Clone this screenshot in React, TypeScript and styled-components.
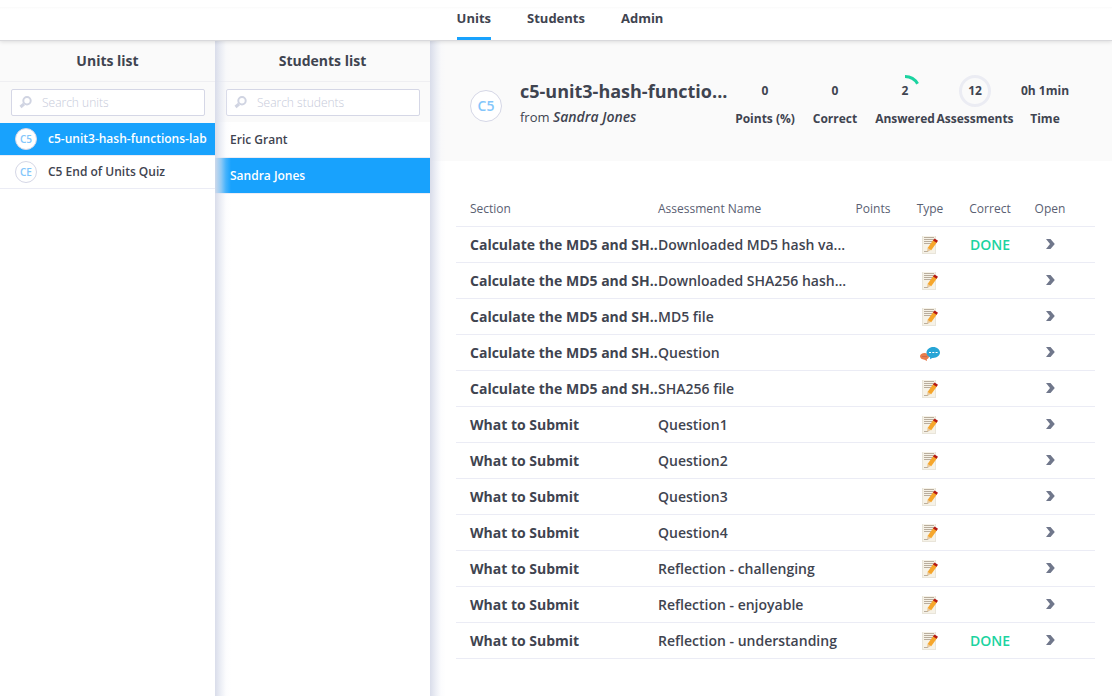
import React from "react";
import styled, { createGlobalStyle, css } from "styled-components";

const color = {
  text: "#3f4450",
  muted: "#5a6072",
  blue: "#18a2fd",
  paleBlue: "#83c6fb",
  line: "#ebecf5",
  outline: "#d5d7e6",
  panel: "#fafafa",
  green: "#1bd3a0",
};

const GlobalStyle = createGlobalStyle`
  * { box-sizing: border-box; }
  body {
    margin: 0;
    background: #fff;
    color: ${color.text};
    font-family: "Open Sans", "Noto Sans", sans-serif;
    font-size: 13px;
    line-height: 18px;
  }
  button, input { font: inherit; color: inherit; }
`;

const Page = styled.div`
  display: flex;
  flex-direction: column;
  min-height: 100vh;
`;

const TopNav = styled.nav`
  display: flex;
  justify-content: center;
  gap: 36px;
  height: 41px;
  padding: 9px 0 0 8px;
  border-bottom: 1px solid #d9d9dc;
  box-shadow: 0 1px 4px rgba(0, 0, 0, 0.12);
  position: relative;
  z-index: 2;
  background: linear-gradient(#fff 7px, #fafafa 7px, #fff 9px);
`;

const NavLink = styled.a<{ $active?: boolean }>`
  color: ${color.text};
  font-weight: 700;
  text-decoration: none;
  border-bottom: 3px solid ${(p) => (p.$active ? color.blue : "transparent")};
`;

const Body = styled.div`
  display: flex;
  flex: 1;
`;

const edgeShade = css`
  position: relative;
  &::before {
    content: "";
    position: absolute;
    inset: 0 auto 0 0;
    width: 16px;
    pointer-events: none;
    background: linear-gradient(
      to right,
      rgba(215, 219, 233, 0.95),
      rgba(225, 229, 240, 0.6) 6px,
      rgba(240, 242, 250, 0.2) 11px,
      rgba(250, 250, 255, 0)
    );
  }
`;

const Column = styled.section<{ $shaded?: boolean }>`
  flex: 0 0 215px;
  min-width: 0;
  ${(p) => p.$shaded && edgeShade}
`;

const ColumnTitle = styled.h2`
  margin: 0;
  padding: 10px 0;
  background: ${color.panel};
  border-bottom: 1px solid #efeff2;
  text-align: center;
  font-size: 14px;
  line-height: 20px;
  font-weight: 700;
`;

const SearchArea = styled.div<{ $compact?: boolean }>`
  padding: 7px 10px ${(p) => (p.$compact ? 6 : 7)}px 11px;
  background: ${color.panel};
`;

const SearchField = styled.label`
  display: flex;
  align-items: center;
  gap: 10px;
  height: 27px;
  padding-left: 7px;
  background: #fff;
  border: 1px solid ${color.outline};
  border-radius: 2px;
`;

const SearchInput = styled.input`
  flex: 1;
  min-width: 0;
  padding: 0;
  border: 0;
  outline: 0;
  background: none;
  font-size: 12px;
  &::placeholder {
    color: #c6cad9;
    font-weight: 300;
    opacity: 1;
  }
`;

const List = styled.ul`
  margin: 0;
  padding: 0;
  list-style: none;
`;

const ListButton = styled.button<{ $active?: boolean; $tall?: boolean }>`
  display: flex;
  align-items: center;
  gap: 11px;
  width: 100%;
  height: ${(p) => (p.$tall ? 36 : 33)}px;
  padding: 0 0 0 15px;
  border: 0;
  border-bottom: 1px solid ${color.line};
  background: ${(p) => (p.$active ? color.blue : "#fff")};
  background-clip: padding-box;
  color: ${(p) => (p.$active ? "#fff" : color.text)};
  font-size: 12px;
  font-weight: 600;
  text-align: left;
  white-space: nowrap;
`;

const Avatar = styled.span<{ $large?: boolean }>`
  display: flex;
  flex: none;
  align-items: center;
  justify-content: center;
  width: ${(p) => (p.$large ? 32 : 22)}px;
  height: ${(p) => (p.$large ? 32 : 22)}px;
  border: 1px solid ${color.outline};
  border-radius: 50%;
  background: #fff;
  color: ${color.paleBlue};
  font-size: ${(p) => (p.$large ? 14 : 10)}px;
  font-weight: 600;
`;

const Main = styled.main`
  flex: 1;
  min-width: 0;
  ${edgeShade}
`;

const Hero = styled.header`
  display: flex;
  height: 120px;
  padding: 34px 32px 0 40px;
  background: ${color.panel};
`;

const HeroAvatar = styled.div`
  padding: 15px 18px 0 0;
`;

const HeroText = styled.div`
  flex: 1;
  min-width: 0;
  padding-top: 3px;
`;

const HeroTitle = styled.h1`
  margin: 0;
  font-size: 18px;
  line-height: 26px;
  font-weight: 700;
  white-space: nowrap;
`;

const HeroFrom = styled.p`
  margin: 0;
  line-height: 26px;
  em {
    font-size: 14px;
    font-weight: 600;
  }
`;

const Stats = styled.dl`
  display: flex;
  margin: 0;
`;

const Stat = styled.div`
  display: flex;
  flex-direction: column-reverse;
  justify-content: flex-end;
  align-items: center;
  gap: 3px;
  width: 70px;
  font-size: 12px;
  font-weight: 700;
  white-space: nowrap;
`;

const StatLabel = styled.dt`
  line-height: 18px;
`;

const StatValue = styled.dd`
  display: grid;
  place-items: center;
  height: 32px;
  margin: 0;
  > * {
    grid-area: 1 / 1;
  }
`;

const TableArea = styled.div`
  padding: 30px 17px 37px 26px;
`;

const Table = styled.table`
  width: 100%;
  table-layout: fixed;
  border-collapse: separate;
  border-spacing: 0;
`;

const HeadCell = styled.th<{ $width?: number; $center?: boolean; $first?: boolean; $last?: boolean }>`
  width: ${(p) => (p.$width ? `${p.$width}px` : "auto")};
  height: 36px;
  padding: 0 ${(p) => (p.$last ? 15 : 0)}px 0 ${(p) => (p.$first ? 14 : 0)}px;
  border-bottom: 1px solid ${color.line};
  color: ${color.muted};
  font-size: 12px;
  font-weight: 400;
  text-align: ${(p) => (p.$center ? "center" : "left")};
`;

const Cell = styled.td<{ $center?: boolean; $first?: boolean; $last?: boolean; $done?: boolean }>`
  height: 36px;
  padding: 0 ${(p) => (p.$last ? 15 : 0)}px 0 ${(p) => (p.$first ? 14 : 0)}px;
  border-bottom: 1px solid ${color.line};
  color: ${(p) => (p.$done ? color.green : color.text)};
  font-size: 14px;
  font-weight: ${(p) => (p.$first ? 700 : 600)};
  text-align: ${(p) => (p.$center ? "center" : "left")};
  white-space: nowrap;
  svg {
    vertical-align: middle;
  }
`;

const OpenButton = styled.button`
  display: block;
  margin: 0 auto;
  padding: 0 4px 4px;
  border: 0;
  background: none;
  line-height: 14px;
`;

const SearchIcon = () => (
  <svg width="13" height="13" viewBox="0 0 13 13" fill="none" stroke="#d0d4e2" aria-hidden="true">
    <circle cx="8" cy="4.800" r="3.700" strokeWidth="2" />
    <path d="M5 8 L1.500 11" strokeWidth="3" />
  </svg>
);

const MemoIcon = () => (
  <svg width="16" height="18" viewBox="0 0 16 18" role="img" aria-label="Free text">
    <path d="M0 0h14v18H0z" fill="#e9e5da" />
    <path d="M1 0h12v17H1z" fill="#f6f2e7" />
    <path d="M2 1.500h10M2 3.500h10M2 5.500h9M2 7.500h7" stroke="#b9ad9d" />
    <path d="M2 15.500h4l1-1" stroke="#b9ad9d" fill="none" />
    <path d="M5 15.500l.6-3.800 3.400 2.300z" fill="#e8c89a" />
    <path d="M5.600 12L11.400 3.800l3.600 2.400L9.200 14.300z" fill="#f6a62b" />
    <path d="M11 4.400L12.600 2.400l3.400 2.300-1.400 2.100z" fill="#b51a15" />
  </svg>
);

const ChatIcon = () => (
  <svg width="20" height="14" viewBox="0 0 20 14" role="img" aria-label="Discussion">
    <path d="M4.500 6C2 6 0 7.500 0 9.300s2 3.400 4.500 3.400L7 14l-.2-1.700C8.400 11.700 9 10.500 9 9.300 9 7.500 7 6 4.500 6z" fill="#e87d4c" />
    <path d="M2 9.500h5" stroke="#c96b50" />
    <path d="M13.300 0C9.500 0 6.500 2.500 6.500 5.500c0 2.200 1.400 4 3.700 4.900L10 12.300l2.300-1.400c4.300.3 7.700-2.200 7.700-5.400C20 2.500 17 0 13.300 0z" fill="#27a5d6" />
    <path d="M9 5h2v1H9zM12.300 5h2v1h-2zM15.600 5h2v1h-2z" fill="#fff" />
  </svg>
);

const ChevronIcon = () => (
  <svg width="9" height="10" viewBox="0 0 9 10" aria-hidden="true">
    <path d="M0 0h4.500l4.300 5-4.300 5H0l4-5z" fill="#70778b" />
  </svg>
);

const ProgressArc = () => (
  <svg width="32" height="32" viewBox="0 0 32 32" fill="none" aria-hidden="true">
    <path d="M16 1.500A14.500 14.500 0 0 1 28.600 8.800" stroke={color.green} strokeWidth="3" />
  </svg>
);

const FullRing = () => (
  <svg width="32" height="32" viewBox="0 0 32 32" fill="none" aria-hidden="true">
    <circle cx="16" cy="16" r="14.500" stroke="#ebecf3" strokeWidth="3" />
  </svg>
);

const units = [
  { code: "C5", name: "c5-unit3-hash-functions-lab", active: true },
  { code: "CE", name: "C5 End of Units Quiz" },
];

const students = [{ name: "Eric Grant" }, { name: "Sandra Jones", active: true }];

const stats: { label: string; value: string; ring?: React.ReactNode }[] = [
  { label: "Points (%)", value: "0" },
  { label: "Correct", value: "0" },
  { label: "Answered", value: "2", ring: <ProgressArc /> },
  { label: "Assessments", value: "12", ring: <FullRing /> },
  { label: "Time", value: "0h 1min" },
];

const MD5 = "Calculate the MD5 and SH..";
const SUBMIT = "What to Submit";

const assessments: { section: string; name: string; chat?: boolean; done?: boolean }[] = [
  { section: MD5, name: "Downloaded MD5 hash va...", done: true },
  { section: MD5, name: "Downloaded SHA256 hash..." },
  { section: MD5, name: "MD5 file" },
  { section: MD5, name: "Question", chat: true },
  { section: MD5, name: "SHA256 file" },
  { section: SUBMIT, name: "Question1" },
  { section: SUBMIT, name: "Question2" },
  { section: SUBMIT, name: "Question3" },
  { section: SUBMIT, name: "Question4" },
  { section: SUBMIT, name: "Reflection - challenging" },
  { section: SUBMIT, name: "Reflection - enjoyable" },
  { section: SUBMIT, name: "Reflection - understanding", done: true },
];

const Search = ({ label, compact }: { label: string; compact?: boolean }) => (
  <SearchArea $compact={compact}>
    <SearchField>
      <SearchIcon />
      <SearchInput type="text" placeholder={label} aria-label={label} />
    </SearchField>
  </SearchArea>
);

export default function App() {
  return (
    <Page>
      <GlobalStyle />
      <TopNav>
        <NavLink href="#units" $active>Units</NavLink>
        <NavLink href="#students">Students</NavLink>
        <NavLink href="#admin">Admin</NavLink>
      </TopNav>
      <Body>
        <Column>
          <ColumnTitle>Units list</ColumnTitle>
          <Search label="Search units" />
          <List>
            {units.map((u) => (
              <li key={u.code}>
                <ListButton $active={u.active}>
                  <Avatar>{u.code}</Avatar>
                  {u.name}
                </ListButton>
              </li>
            ))}
          </List>
        </Column>
        <Column $shaded>
          <ColumnTitle>Students list</ColumnTitle>
          <Search label="Search students" compact />
          <List>
            {students.map((s) => (
              <li key={s.name}>
                <ListButton $tall $active={s.active}>{s.name}</ListButton>
              </li>
            ))}
          </List>
        </Column>
        <Main>
          <Hero>
            <HeroAvatar>
              <Avatar $large>C5</Avatar>
            </HeroAvatar>
            <HeroText>
              <HeroTitle>c5-unit3-hash-functio...</HeroTitle>
              <HeroFrom>
                from <em>Sandra Jones</em>
              </HeroFrom>
            </HeroText>
            <Stats>
              {stats.map((s) => (
                <Stat key={s.label}>
                  <StatLabel>{s.label}</StatLabel>
                  <StatValue>
                    {s.ring}
                    <span>{s.value}</span>
                  </StatValue>
                </Stat>
              ))}
            </Stats>
          </Hero>
          <TableArea>
            <Table>
              <thead>
                <tr>
                  <HeadCell $width={202} $first>Section</HeadCell>
                  <HeadCell>Assessment Name</HeadCell>
                  <HeadCell $width={54} $center>Points</HeadCell>
                  <HeadCell $width={60} $center>Type</HeadCell>
                  <HeadCell $width={60} $center>Correct</HeadCell>
                  <HeadCell $width={75} $center $last>Open</HeadCell>
                </tr>
              </thead>
              <tbody>
                {assessments.map((a) => (
                  <tr key={a.name}>
                    <Cell $first>{a.section}</Cell>
                    <Cell>{a.name}</Cell>
                    <Cell />
                    <Cell $center>{a.chat ? <ChatIcon /> : <MemoIcon />}</Cell>
                    <Cell $center $done>{a.done && "DONE"}</Cell>
                    <Cell $center $last>
                      <OpenButton aria-label={`Open ${a.name}`}>
                        <ChevronIcon />
                      </OpenButton>
                    </Cell>
                  </tr>
                ))}
              </tbody>
            </Table>
          </TableArea>
        </Main>
      </Body>
    </Page>
  );
}
